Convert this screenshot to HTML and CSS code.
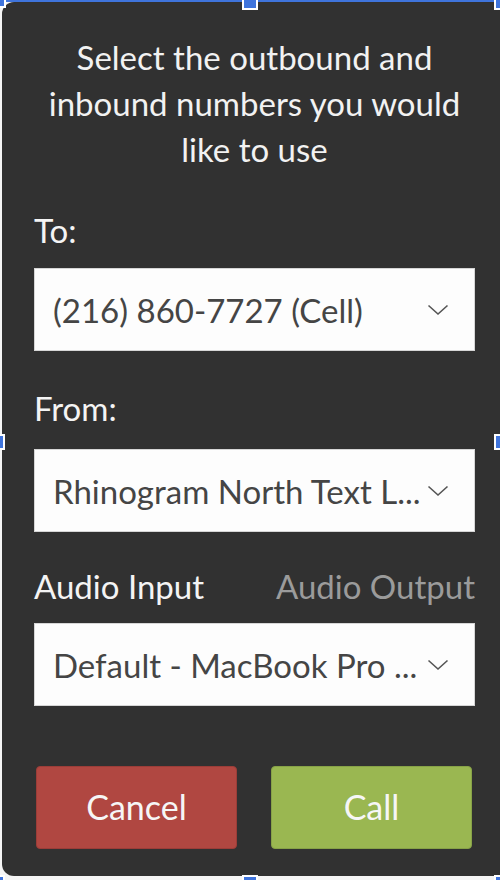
FILE: index.html
```html
<!DOCTYPE html>
<html>
<head>
<meta charset="utf-8">
<link rel="stylesheet" href="styles.css">
</head>
<body>
<div class="frame">
  <div class="card">
    <div class="title">Select the outbound and inbound numbers you would like to use</div>
    <div class="field field-to">
      <div class="label">To:</div>
      <div class="select">
        <span class="value">(216) 860-7727 (Cell)</span>
        <svg class="chev" width="22" height="12" viewBox="0 0 22 12"><path d="M1.5 1.5 L11 10 L20.5 1.5" fill="none" stroke="#555" stroke-width="1.6"/></svg>
      </div>
    </div>
    <div class="field field-from">
      <div class="label">From:</div>
      <div class="select">
        <span class="value">Rhinogram North Text L...</span>
        <svg class="chev" width="22" height="12" viewBox="0 0 22 12"><path d="M1.5 1.5 L11 10 L20.5 1.5" fill="none" stroke="#555" stroke-width="1.6"/></svg>
      </div>
    </div>
    <div class="field field-audio">
      <div class="tabs">
        <span class="label">Audio Input</span>
        <span class="label muted">Audio Output</span>
      </div>
      <div class="select">
        <span class="value">Default - MacBook Pro ...</span>
        <svg class="chev" width="22" height="12" viewBox="0 0 22 12"><path d="M1.5 1.5 L11 10 L20.5 1.5" fill="none" stroke="#555" stroke-width="1.6"/></svg>
      </div>
    </div>
    <div class="actions">
      <button class="btn btn-cancel">Cancel</button>
      <button class="btn btn-call">Call</button>
    </div>
  </div>
  <div class="topline"></div>
  <div class="handle h-tl"></div>
  <div class="handle h-tm"></div>
  <div class="handle h-tr"></div>
  <div class="handle h-ml"></div>
  <div class="handle h-mr"></div>
  <div class="handle h-bl"></div>
  <div class="handle h-bm"></div>
  <div class="handle h-br"></div>
</div>
</body>
</html>
```
FILE: styles.css
```css
html, body {
  margin: 0;
  padding: 0;
  background: #f5f5f5;
  overflow: hidden;
}
.frame {
  position: relative;
  width: 500px;
  height: 880px;
  overflow: hidden;
  padding: 2px 0 0 2px;
  box-sizing: border-box;
  font-family: Lato, "Open Sans", sans-serif;
}
.card {
  width: 505px;
  height: 874px;
  box-sizing: border-box;
  background: #313131;
  border-radius: 12px;
  padding: 32px 32px 0 32px;
  color: #f2f2f2;
}
.title {
  font-size: 33px;
  line-height: 46px;
  text-align: center;
}
.label {
  font-size: 33px;
  line-height: 36px;
  color: #f4f4f4;
}
.label.muted {
  color: #9b9b9b;
}
.field-to { margin-top: 40px; }
.field-from { margin-top: 39px; }
.field-audio { margin-top: 36px; }
.field .select { margin-top: 20px; }
.field-from .select { margin-top: 23px; }
.field-audio .select { margin-top: 19px; }
.tabs {
  display: flex;
  justify-content: space-between;
}
.select {
  height: 83px;
  box-sizing: border-box;
  background: #fdfdfd;
  border: 1px solid #d6d6d6;
  display: flex;
  align-items: center;
  padding: 0 25px 0 18px;
  font-size: 33px;
  color: #454545;
}
.value {
  flex: none;
  white-space: nowrap;
}
.chev { flex: none; margin-left: auto; }
.actions {
  margin-top: 60px;
  display: flex;
  gap: 34px;
  padding: 0 3px 0 2px;
}
.btn {
  flex: 1;
  height: 83px;
  border-radius: 4px;
  font-family: Lato, "Open Sans", sans-serif;
  font-size: 34px;
  color: #f6f6f6;
  padding-bottom: 3px;
  cursor: pointer;
}
.btn-cancel {
  background: #b04741;
  border: 1px solid #9b3d38;
}
.btn-call {
  background: #9ab751;
  border: 1px solid #87a247;
}
.topline {
  position: absolute;
  left: 0;
  top: 0;
  width: 500px;
  height: 2px;
  background: #3f74dc;
}
.handle {
  position: absolute;
  width: 12px;
  height: 12px;
  background: #3f74dc;
  border: 2px solid #ffffff;
}
.h-tl { left: -10px; top: -8px; }
.h-tm { left: 242px; top: -6px; }
.h-tr { left: 494px; top: -6px; }
.h-ml { left: -11px; top: 434px; }
.h-mr { left: 494px; top: 434px; }
.h-bl { left: -11px; top: 875px; }
.h-bm { left: 242px; top: 875px; }
.h-br { left: 494px; top: 875px; }
```
